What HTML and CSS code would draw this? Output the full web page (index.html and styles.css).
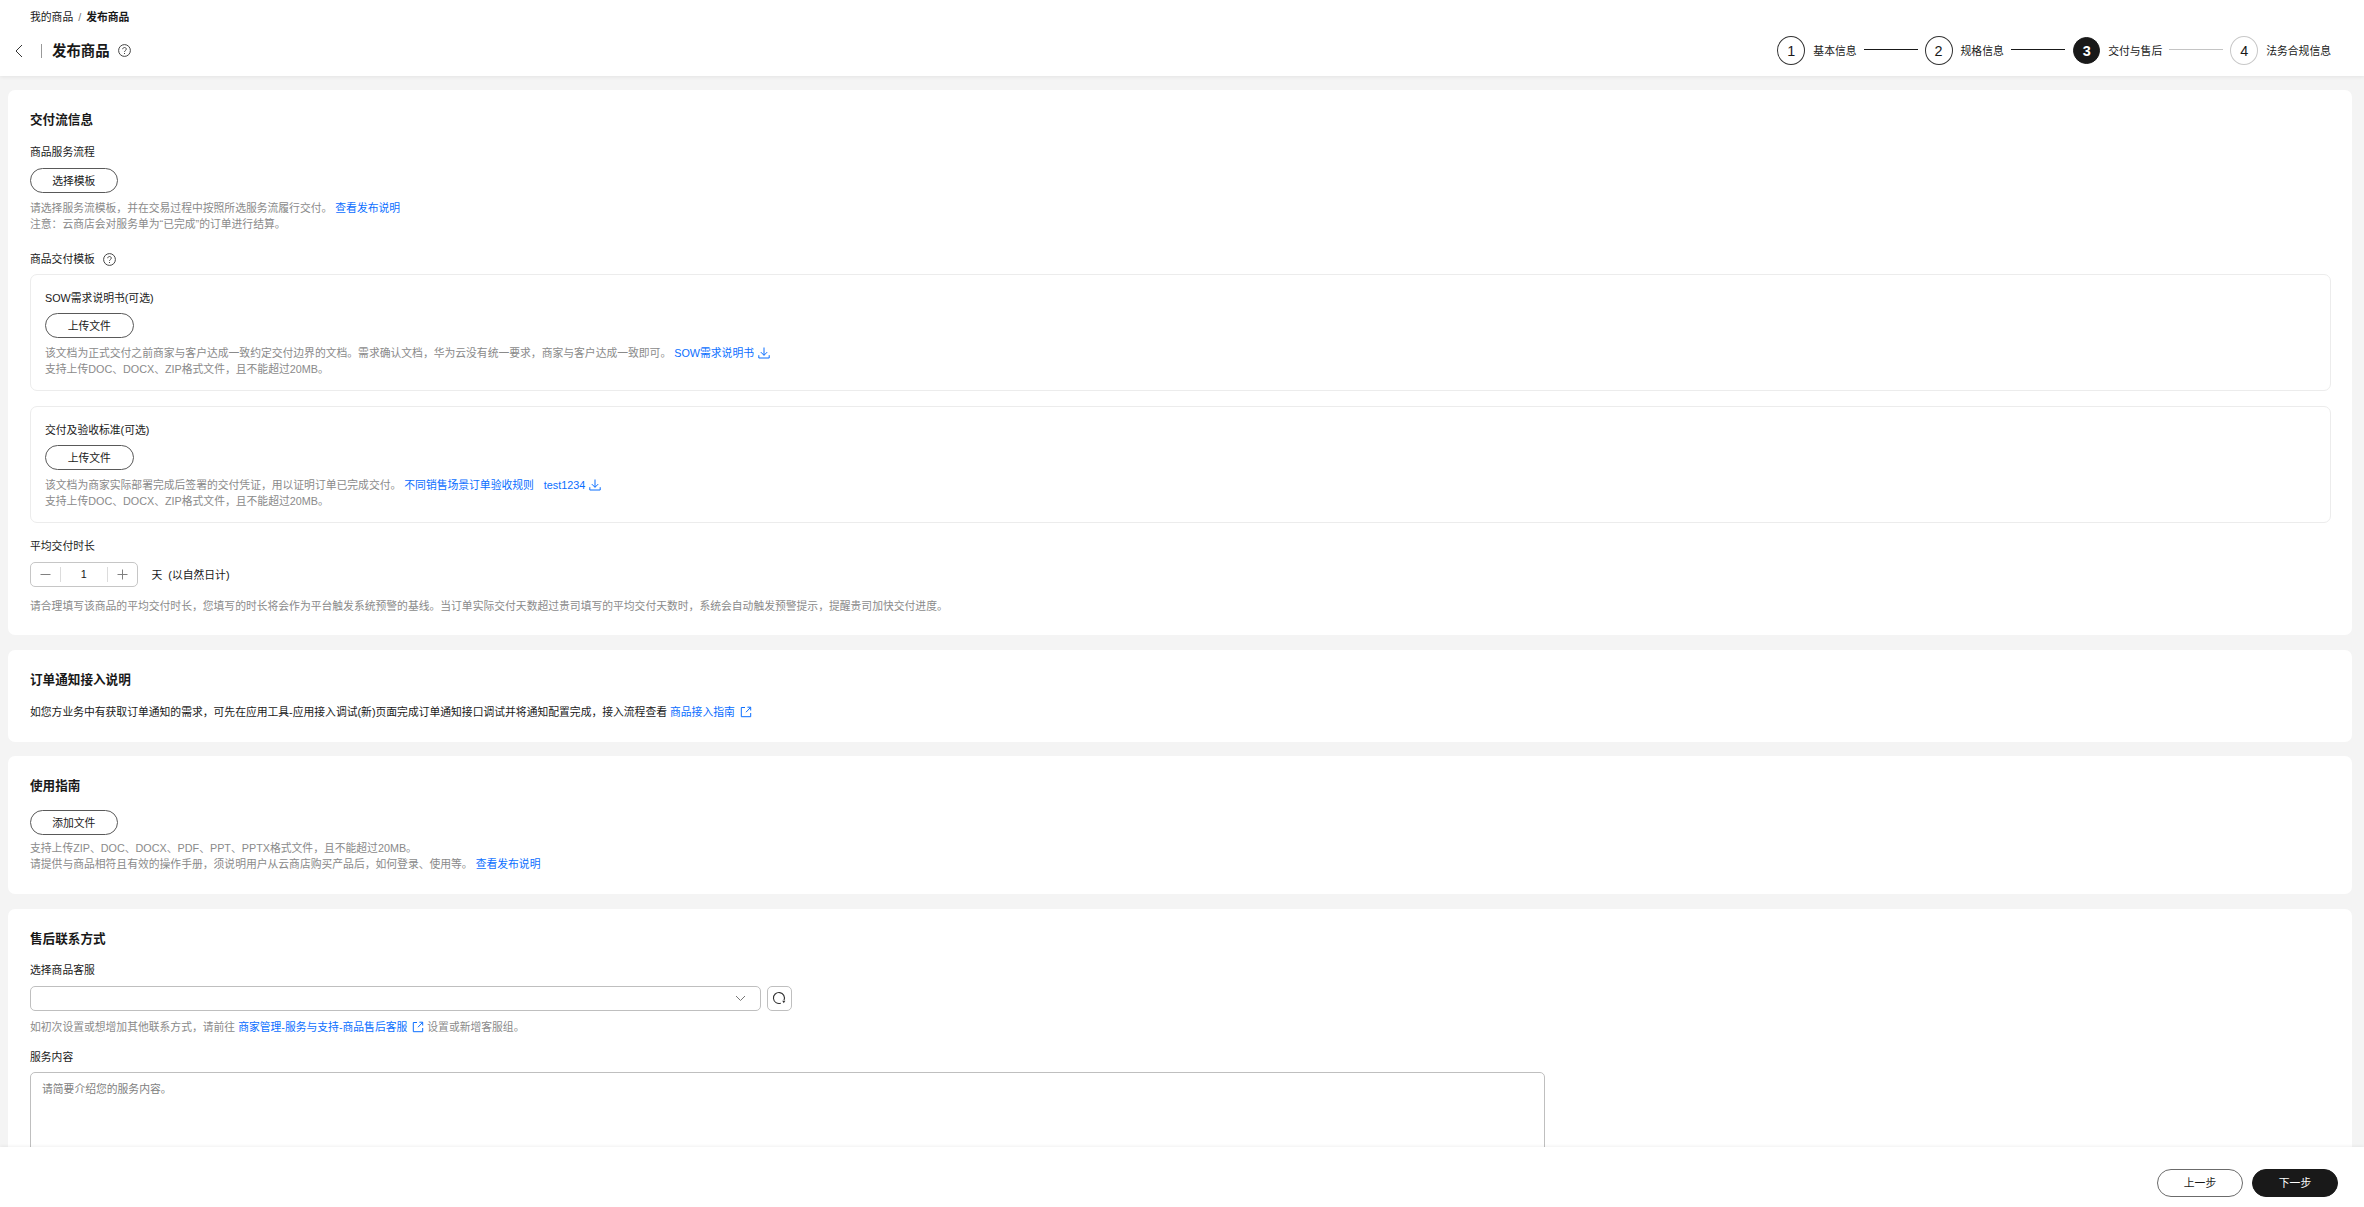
FILE: index.html
```html
<!DOCTYPE html>
<html lang="zh-CN">
<head>
<meta charset="utf-8">
<title>发布商品</title>
<link rel="stylesheet" href="styles.css">
</head>
<body>
<svg class="defs" width="0" height="0" aria-hidden="true">
  <symbol id="i-help" viewBox="0 0 13 13"><circle cx="6.5" cy="6.5" r="5.9" fill="none" stroke="currentColor"/><path d="M4.7 5.2c0-1 .8-1.7 1.8-1.7s1.8.7 1.8 1.6c0 1.3-1.8 1.5-1.8 2.8" fill="none" stroke="currentColor"/><path d="M6.5 9v1" fill="none" stroke="currentColor"/></symbol>
  <symbol id="i-down" viewBox="0 0 12 12"><path d="M6 .5v7.800M2.800 5.100 6 8.300l3.200-3.200M.8 8.200v2.800h10.400V8.200" fill="none" stroke="currentColor"/></symbol>
  <symbol id="i-ext" viewBox="0 0 12 12"><path d="M5 1.500H1.300v9.200h9.400V7M6 6.200 10.600 1.400M7.400 1.200h3.300v3.300" fill="none" stroke="currentColor"/></symbol>
</svg>
<div class="page">
  <header class="top">
    <nav class="crumbs"><span>我的商品</span><span class="crumb-sep">/</span><strong>发布商品</strong></nav>
    <div class="top-row">
      <svg class="back" width="8" height="14" viewBox="0 0 8 14"><path d="M7 1 1 7l6 6" fill="none" stroke="currentColor"/></svg>
      <span class="top-div"></span>
      <h1 class="page-title">发布商品</h1>
      <svg class="ico-help"><use href="#i-help"/></svg>
      <ol class="steps">
        <li class="step"><span class="num">1</span><span>基本信息</span><span class="line"></span></li>
        <li class="step"><span class="num">2</span><span>规格信息</span><span class="line"></span></li>
        <li class="step step-on"><span class="num">3</span><span>交付与售后</span><span class="line line-off"></span></li>
        <li class="step step-off"><span class="num">4</span><span>法务合规信息</span></li>
      </ol>
    </div>
  </header>

  <main class="content">
    <section class="card card-a">
      <h2 class="card-title">交付流信息</h2>
      <div class="label">商品服务流程</div>
      <button class="btn">选择模板</button>
      <p class="help">请选择服务流模板，并在交易过程中按照所选服务流履行交付。 <a class="link">查看发布说明</a><br>注意：云商店会对服务单为“已完成”的订单进行结算。</p>
      <div class="label label-gap">商品交付模板<svg class="ico-help ico-help-s"><use href="#i-help"/></svg></div>
      <div class="box">
        <div class="box-label">SOW需求说明书(可选)</div>
        <button class="btn btn-wide">上传文件</button>
        <p class="help">该文档为正式交付之前商家与客户达成一致约定交付边界的文档。需求确认文档，华为云没有统一要求，商家与客户达成一致即可。 <a class="link">SOW需求说明书<svg class="ico-link"><use href="#i-down"/></svg></a><br>支持上传DOC、DOCX、ZIP格式文件，且不能超过20MB。</p>
      </div>
      <div class="box box-next">
        <div class="box-label">交付及验收标准(可选)</div>
        <button class="btn btn-wide">上传文件</button>
        <p class="help">该文档为商家实际部署完成后签署的交付凭证，用以证明订单已完成交付。<a class="link link-first">不同销售场景订单验收规则</a><a class="link link-next">test1234<svg class="ico-link"><use href="#i-down"/></svg></a><br>支持上传DOC、DOCX、ZIP格式文件，且不能超过20MB。</p>
      </div>
      <div class="label label-after-box">平均交付时长</div>
      <div class="qty-row">
        <div class="qty">
          <span class="qty-btn"><svg width="11" height="11" viewBox="0 0 11 11"><path d="M.5 5.500h10" stroke="currentColor"/></svg></span>
          <span class="qty-val">1</span>
          <span class="qty-btn"><svg width="11" height="11" viewBox="0 0 11 11"><path d="M.5 5.500h10M5.500.5v10" stroke="currentColor"/></svg></span>
        </div>
        <span class="qty-unit">天</span><span>(以自然日计)</span>
      </div>
      <p class="help help-wide">请合理填写该商品的平均交付时长，您填写的时长将会作为平台触发系统预警的基线。当订单实际交付天数超过贵司填写的平均交付天数时，系统会自动触发预警提示，提醒贵司加快交付进度。</p>
    </section>

    <section class="card card-b">
      <h2 class="card-title">订单通知接入说明</h2>
      <p class="body-text">如您方业务中有获取订单通知的需求，可先在应用工具-应用接入调试(新)页面完成订单通知接口调试并将通知配置完成，接入流程查看 <a class="link">商品接入指南<svg class="ico-link ico-ext"><use href="#i-ext"/></svg></a></p>
    </section>

    <section class="card card-b">
      <h2 class="card-title">使用指南</h2>
      <button class="btn">添加文件</button>
      <p class="help help-tight">支持上传ZIP、DOC、DOCX、PDF、PPT、PPTX格式文件，且不能超过20MB。<br>请提供与商品相符且有效的操作手册，须说明用户从云商店购买产品后，如何登录、使用等。 <a class="link">查看发布说明</a></p>
    </section>

    <section class="card">
      <h2 class="card-title">售后联系方式</h2>
      <div class="label label-tight">选择商品客服</div>
      <div class="select-row">
        <div class="select"><svg width="11" height="7" viewBox="0 0 11 7"><path d="M1 1l4.500 4.500L10 1" fill="none" stroke="currentColor"/></svg></div>
        <button class="refresh"><svg width="14" height="14" viewBox="0 0 14 14"><path d="M8.800 12.200A5.500 5.500 0 1 1 12 9.200" fill="none" stroke="currentColor" stroke-width="1.100"/><path d="M10.200 9.800h3.200l-1.600 2.400z" fill="currentColor"/></svg></button>
      </div>
      <p class="help help-select">如初次设置或想增加其他联系方式，请前往 <a class="link">商家管理-服务与支持-商品售后客服<svg class="ico-link ico-ext"><use href="#i-ext"/></svg></a> 设置或新增客服组。</p>
      <div class="label label-mid">服务内容</div>
      <div class="textarea">请简要介绍您的服务内容。</div>
    </section>
  </main>

  <footer class="foot">
    <button class="btn btn-foot">上一步</button>
    <button class="btn btn-foot btn-dark">下一步</button>
  </footer>
</div>
</body>
</html>
```

FILE: styles.css
```css
* { box-sizing: border-box; }
html, body { margin: 0; height: 100%; overflow: hidden; }
body {
  font-family: "Liberation Sans", "Noto Sans CJK SC", sans-serif;
  font-size: 10.8px;
  line-height: 16px;
  color: #191919;
  background: #f4f4f4;
}
.defs { position: absolute; }
h1, h2, p, ol { margin: 0; padding: 0; }
button { font: inherit; color: inherit; cursor: pointer; }

.page { height: 100vh; display: flex; flex-direction: column; }

.top {
  flex: none;
  height: 76px;
  padding: 9px 33px 0 15px;
  background: #fff;
  box-shadow: 0 1px 4px rgba(0, 0, 0, .07);
  position: relative;
  z-index: 2;
}
.crumbs { margin-left: 15px; display: flex; }
.crumb-sep { margin: 0 5px; color: #777; }
.crumbs strong { font-weight: 700; }
.top-row { margin-top: 11px; height: 29px; display: flex; align-items: center; }
.back { color: #333; display: block; }
.top-div { width: 1px; height: 14px; background: #999; margin: 0 10px 0 18px; }
.page-title { font-size: 14.4px; line-height: 20px; font-weight: 700; }
.ico-help { width: 13px; height: 13px; color: #444; margin-left: 8px; display: block; }
.ico-help-s { margin-left: 8px; display: inline-block; vertical-align: -3px; }

.steps { list-style: none; margin-left: auto; display: flex; align-items: center; }
.step { display: flex; align-items: center; }
.num {
  width: 28px; height: 29px; margin-right: 8px;
  border: 1px solid #333; border-radius: 50%;
  display: flex; align-items: center; justify-content: center;
  font-size: 14.4px;
}
.line { width: 54px; height: 1px; background: #191919; margin: 0 7px 2px; }
.line-off { background: #c4c4c4; }
.step-on .num { background: #191919; border-color: #191919; color: #fff; font-weight: 700; height: 27px; width: 27px; margin-left: 1.500px; }
.step-off .num { border-color: #c8c8c8; }

.content { flex: 1; min-height: 0; overflow: hidden; padding: 14px 12px 0 8px; }
.card { background: #fff; border-radius: 7px; padding: 20px 22px 21px; margin-bottom: 14.6px; }
.card-title { font-size: 12.6px; line-height: 20px; font-weight: 700; }
.card-b { padding-bottom: 22px; }
.label { margin-top: 14px; }
.label-gap { margin-top: 19px; }
.label-after-box { margin-top: 15px; }
.label-tight { margin-top: 13px; }
.label-mid { margin-top: 14px; }

.btn {
  display: block; width: 87.500px; height: 25px; margin-top: 8px; padding: 0;
  background: #fff; border: 1px solid #595959; border-radius: 13px;
  text-align: center;
}
.btn-wide { width: 88.500px; margin-top: 7px; }
.card-title + .btn { margin-top: 14px; }

.help { margin-top: 7px; color: #8a8a8a; }
.help-tight { margin-top: 5px; }
.help-wide { margin-top: 11px; }
.help-select { margin-top: 8px; }
.body-text { margin-top: 14px; color: #191919; }
.link { color: #0a6eff; }
.link-first { margin-left: 3px; }
.link-next { margin-left: 10px; }
.ico-link { width: 12px; height: 12px; margin-left: 4px; vertical-align: -2px; }
.ico-ext { margin-left: 5px; }

.box {
  margin-top: 7px; padding: 15px 14px 13px;
  width: 2301px;
  border: 1px solid #ececec; border-radius: 7px;
}
.box-next { margin-top: 15px; padding-top: 15px; }
.box-label { color: #191919; }

.qty-row { margin-top: 8px; display: flex; align-items: center; }
.qty {
  width: 107.500px; height: 25px;
  border: 1px solid #c6c6c6; border-radius: 5px;
  display: flex; align-items: center;
}
.qty-btn { width: 29px; color: #808080; display: flex; justify-content: center; }
.qty-val { width: 49px; height: 15px; line-height: 15px; text-align: center; border-left: 1px solid #dcdcdc; border-right: 1px solid #dcdcdc; }
.qty-unit { margin: 0 6px 0 14px; }

.select-row { margin-top: 8px; display: flex; gap: 6px; }
.select {
  width: 731px; height: 25px; padding-right: 14px;
  border: 1px solid #bfbfbf; border-radius: 5px;
  display: flex; align-items: center; justify-content: flex-end;
  color: #777;
}
.refresh {
  width: 24.500px; height: 25px; padding: 0;
  background: #fff; border: 1px solid #bfbfbf; border-radius: 5px;
  display: flex; align-items: center; justify-content: center;
  color: #333;
}
.textarea {
  margin-top: 7px; width: 1515px; height: 140px; padding: 8px 11px;
  border: 1px solid #bfbfbf; border-radius: 5px; color: #808080;
}

.foot {
  flex: none; height: 60px;
  padding: 22px 26px 10px 0;
  background: #fff;
  box-shadow: 0 -1px 3px rgba(0, 0, 0, .06);
  display: flex; justify-content: flex-end; gap: 9px;
  position: relative; z-index: 2;
}
.btn-foot { width: 86px; height: 28px; margin: 0; border-radius: 14px; border-color: #6b6b6b; }
.btn-dark { background: #191919; border-color: #191919; color: #fff; }
```
